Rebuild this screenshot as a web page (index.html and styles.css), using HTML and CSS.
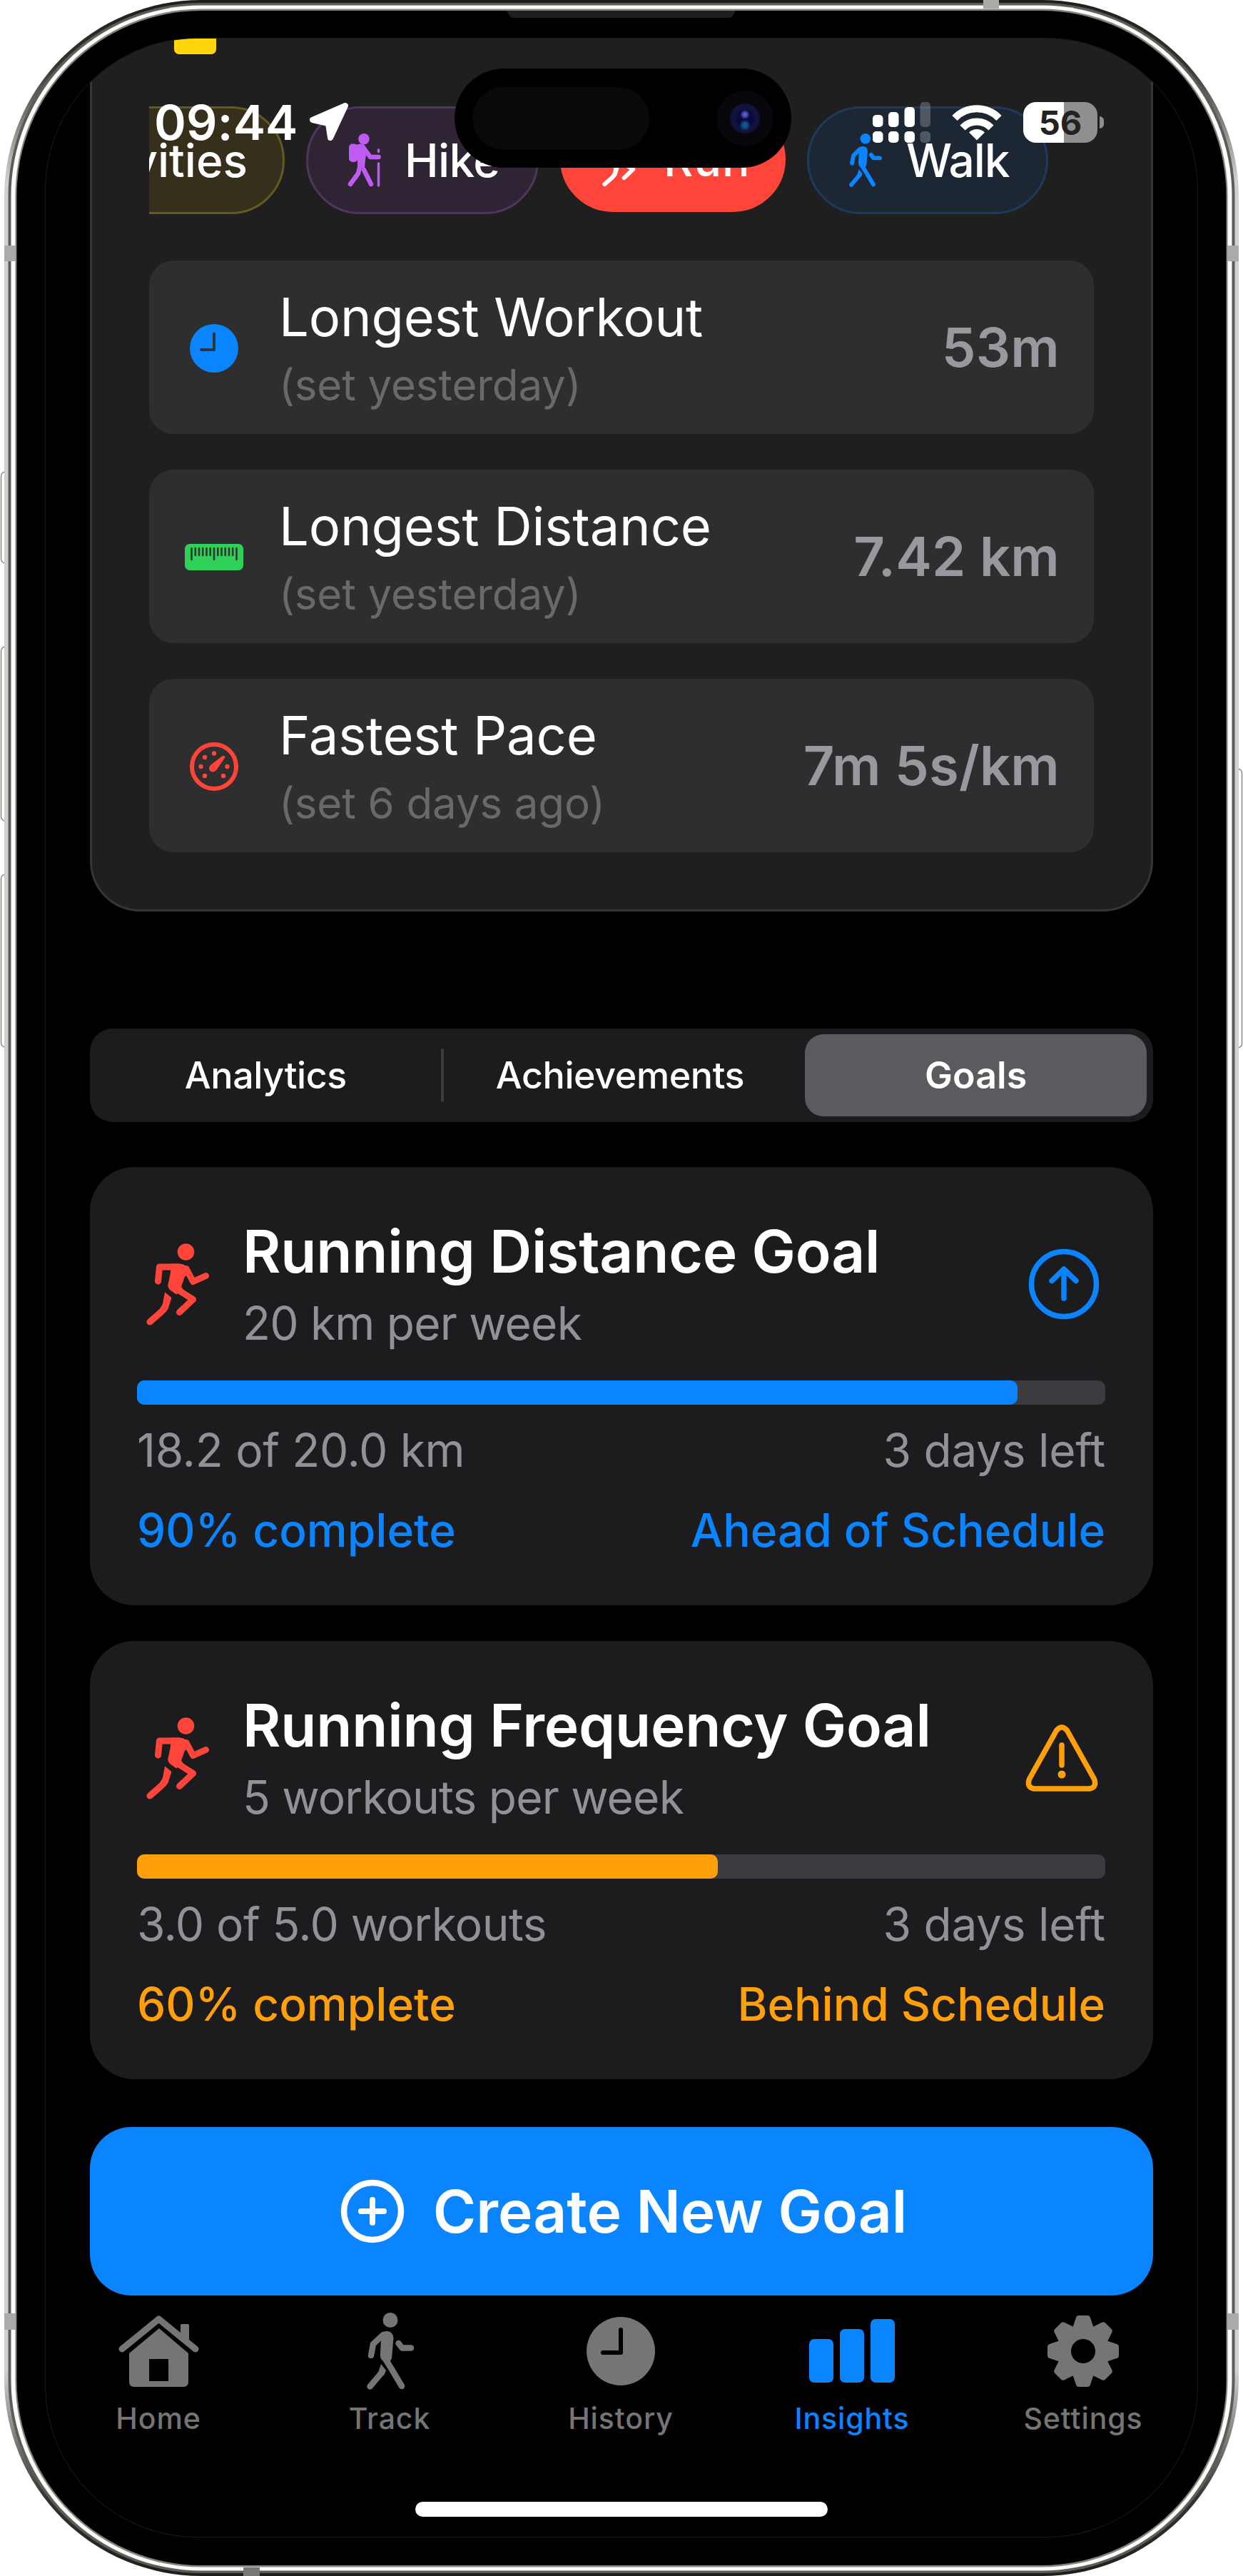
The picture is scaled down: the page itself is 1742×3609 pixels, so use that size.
FILE: index.html
```html
<!DOCTYPE html>
<html lang="en">
<head>
<meta charset="utf-8">
<title>Insights</title>
<link rel="stylesheet" href="styles.css">
</head>
<body>
<svg class="defs" width="0" height="0" aria-hidden="true">
  <symbol id="i-run" viewBox="0 0 88 114">
    <g fill="none" stroke="currentColor" stroke-width="9" stroke-linecap="round" stroke-linejoin="round">
      <path d="M16.500 52.500 18.500 32.500H46"/>
      <path d="M56 35 65.500 53 83.500 45"/>
      <path d="M38 60.500 65.500 78 46.500 96"/>
      <path d="M26.500 88 21.500 95 5 109.500"/>
    </g>
    <circle cx="55.500" cy="11.500" r="11.800" fill="currentColor"/>
    <path fill="currentColor" d="M34 28H46Q54 28 58 34L62 42 54 46 49 60 52 64 42 71 33 64.500Q29 61 31 55L34 40Z"/>
    <path fill="currentColor" d="M26 68 35.500 75.500 31 90Q29 95 24 98L19 91Q22 88 23 84Z"/>
  </symbol>
  <symbol id="i-walk" viewBox="0 0 67 108">
    <circle cx="34" cy="10.500" r="10.500" fill="currentColor"/>
    <path fill="currentColor" d="M19 31Q24 25.500 30 26 38 27 38.500 36L36 64 33 70 24 68Q19 65 20 56L21 38Z"/>
    <g fill="none" stroke="currentColor" stroke-width="8.500" stroke-linecap="round" stroke-linejoin="round">
      <path d="M24 31 10 44 7 60"/>
      <path d="M45.500 43 50.500 49.500H63"/>
      <path d="M27 65 37 81 50 103"/>
      <path d="M22 84 5.500 103.500"/>
    </g>
    <path fill="currentColor" d="M21 72 28 81 25 88 17 84Z"/>
  </symbol>
  <symbol id="i-hike" viewBox="0 0 47 75">
    <circle cx="23" cy="7.700" r="7.700" fill="currentColor"/>
    <rect x="2" y="14.500" width="12.500" height="25.500" rx="5" fill="currentColor"/>
    <path fill="currentColor" d="M12 16Q17 13.500 22 15 26 17 27 24L25 37 24 48 14 48 14 18Z"/>
    <g fill="none" stroke="currentColor" stroke-width="6.500" stroke-linecap="round" stroke-linejoin="round">
      <path d="M23 21 32 33H43.500"/>
      <path d="M18 44 15 56 4 71"/>
      <path d="M23 51 33 71"/>
      <path d="M43.500 23V25.500M43.500 42V73" stroke-width="3.500"/>
    </g>
  </symbol>
</svg>

<main class="phone">
  <svg class="frame" width="1742" height="3609" viewBox="0 0 1742 3609" aria-hidden="true">
    <defs>
      <linearGradient id="edge" x1="0" y1="0" x2="0" y2="3609" gradientUnits="userSpaceOnUse">
        <stop offset="0" stop-color="#1e1e1b"/><stop offset=".025" stop-color="#33332f"/><stop offset=".07" stop-color="#d0d0ce"/>
        <stop offset=".92" stop-color="#d0d0ce"/><stop offset=".97" stop-color="#33332f"/><stop offset="1" stop-color="#1e1e1b"/>
      </linearGradient>
    </defs>
    <g fill="#fff" stroke="#8a8a88" stroke-width="1.500">
      <rect x="1.500" y="661" width="12" height="128" rx="6"/>
      <rect x="1.500" y="906" width="12" height="244" rx="6"/>
      <rect x="1.500" y="1225" width="12" height="242" rx="6"/>
      <rect x="1728.500" y="1077" width="12" height="391" rx="6"/>
    </g>
    <rect x="6" y="0" width="1730" height="3609" rx="276" fill="url(#edge)"/>
    <rect x="11.500" y="4" width="1719" height="3601" rx="271" fill="#5c5c59"/>
    <rect x="15.500" y="7.500" width="1711" height="3594" rx="267" fill="#fbfbf9"/>
    <rect x="21.500" y="12.500" width="1699" height="3584" rx="261" fill="#84847f"/>
    <rect x="23.500" y="15" width="1695" height="3579" rx="259" fill="#000"/>
    <g fill="#aaaaa8">
      <path d="M6 344H22V366H6ZM1720 344H1736V366H1720ZM6 3241H22V3264H6ZM1720 3241H1736V3264H1720Z"/>
      <path d="M1378 0H1400V12H1378Z"/>
      <path d="M341 3597H364V3609H341Z" fill="#777774"/>
    </g>
    <path d="M710 15H1031L1027 22Q1025 25 1022 25H719Q716 25 714 22Z" fill="#1e1e1e"/>
  </svg>

  <div class="screen">
    <div class="content">
      <section class="records">
        <span class="peek"></span>
        <div class="pills">
          <span class="pill pill-all">Activities</span>
          <span class="pill pill-hike"><svg><use href="#i-hike"/></svg>Hike</span>
          <span class="pill pill-run"><svg><use href="#i-run"/></svg>Run</span>
          <span class="pill pill-walk"><svg><use href="#i-walk"/></svg>Walk</span>
        </div>
        <ul class="rows">
          <li class="row">
            <span class="row-icon"><svg width="68" height="68" viewBox="0 0 68 68"><circle cx="34" cy="34" r="34" fill="#0a84ff"/><path d="M34 13.500V36H16" fill="none" stroke="#2c3440" stroke-width="4" stroke-linecap="round" stroke-linejoin="round"/></svg></span>
            <div class="row-text"><h3>Longest Workout</h3><p>(set yesterday)</p></div>
            <b>53m</b>
          </li>
          <li class="row">
            <span class="row-icon"><svg width="82" height="37" viewBox="0 0 82 37"><rect width="82" height="37" rx="7" fill="#30d158"/><path d="M9.500 6V22M41 6V22M72.500 6V22M14.800 6V16M20 6V16M25.200 6V16M30.500 6V16M35.700 6V16M46.300 6V16M51.500 6V16M56.700 6V16M62 6V16M67.200 6V16" stroke="#2c3a30" stroke-width="2.600" stroke-linecap="round"/></svg></span>
            <div class="row-text"><h3>Longest Distance</h3><p>(set yesterday)</p></div>
            <b>7.42 km</b>
          </li>
          <li class="row">
            <span class="row-icon"><svg width="68" height="68" viewBox="0 0 68 68" fill="#ff453a"><circle cx="34" cy="34" r="31" fill="none" stroke="#ff453a" stroke-width="6"/><circle cx="34" cy="15.500" r="3.200"/><circle cx="21" cy="21" r="3.200"/><circle cx="15.500" cy="34" r="3.200"/><circle cx="52.500" cy="34" r="3.200"/><circle cx="21" cy="47" r="3.200"/><circle cx="47" cy="47" r="3.200"/><path d="M49 19.500Q47 18 45 19.500L29 32Q25 36.500 28.500 40 33 43.500 37.500 38.500L48.500 22.500Q50 20.500 49 19.500Z"/></svg></span>
            <div class="row-text"><h3>Fastest Pace</h3><p>(set 6 days ago)</p></div>
            <b>7m 5s/km</b>
          </li>
        </ul>
      </section>

      <nav class="segments">
        <span>Analytics</span>
        <span class="divided">Achievements</span>
        <span class="selected">Goals</span>
      </nav>

      <article class="goal ahead">
        <header>
          <svg class="runner"><use href="#i-run"/></svg>
          <div class="goal-text"><h2>Running Distance Goal</h2><p>20 km per week</p></div>
          <svg class="state" width="102" height="100" viewBox="0 0 102 100" fill="none" stroke="#0a84ff" stroke-width="7.500" stroke-linecap="round" stroke-linejoin="round"><circle cx="51" cy="50" r="45.500"/><path d="M51 70V30M34 45.500 51 29 68 45.500"/></svg>
        </header>
        <div class="bar"><i style="width:90.9%"></i></div>
        <div class="stats"><span>18.2 of 20.0 km</span><span>3 days left</span></div>
        <div class="stats status"><span>90% complete</span><span>Ahead of Schedule</span></div>
      </article>

      <article class="goal behind">
        <header>
          <svg class="runner"><use href="#i-run"/></svg>
          <div class="goal-text"><h2>Running Frequency Goal</h2><p>5 workouts per week</p></div>
          <svg class="state" width="102" height="94" viewBox="0 0 102 94" fill="none" stroke="#ff9f0a" stroke-width="7.500" stroke-linecap="round" stroke-linejoin="round"><path d="M43.500 8.500Q51 -.5 58.500 8.500L96.500 76.500Q100.500 88 90 90H12Q1.500 88 5.500 76.500Z"/><path d="M51 29V57"/><circle cx="51" cy="70" r="5.500" fill="#ff9f0a" stroke="none"/></svg>
        </header>
        <div class="bar"><i style="width:60%"></i></div>
        <div class="stats"><span class="tight">3.0 of 5.0 workouts</span><span>3 days left</span></div>
        <div class="stats status"><span>60% complete</span><span>Behind Schedule</span></div>
      </article>

      <button class="create">
        <svg width="90" height="90" viewBox="0 0 90 90" fill="none" stroke="#fff" stroke-width="8.500" stroke-linecap="round"><circle cx="45" cy="45" r="40"/><path d="M45 29V61M29 45H61" stroke-width="8"/></svg>
        Create New Goal
      </button>
    </div>

    <nav class="tabs">
      <span class="tab"><svg width="113" height="101" viewBox="0 0 113 101"><path d="M87 14Q87 12 89 12H97Q99 12 99 14V40L87 30Z" fill="currentColor"/><path d="M5 47 56.500 5 108 47" fill="none" stroke="currentColor" stroke-width="9" stroke-linecap="round" stroke-linejoin="round"/><path d="M15 53 57 18 98 53V93Q98 100 91 100H22Q15 100 15 93Z" fill="currentColor"/><rect x="43" y="61" width="27" height="31" fill="#000"/></svg>Home</span>
      <span class="tab"><svg width="67" height="108"><use href="#i-walk"/></svg>Track</span>
      <span class="tab"><svg width="96" height="96" viewBox="0 0 96 96"><circle cx="48" cy="48" r="48" fill="currentColor"/><path d="M48 18V50H23" fill="none" stroke="#000" stroke-width="6" stroke-linecap="round" stroke-linejoin="round"/></svg>History</span>
      <span class="tab active"><svg width="120" height="90" viewBox="0 0 120 90" fill="currentColor"><rect x="0" y="28" width="34" height="61" rx="7"/><rect x="43" y="14" width="34" height="75" rx="7"/><rect x="86" y="0" width="34" height="89" rx="7"/></svg>Insights</span>
      <span class="tab"><svg width="100" height="100" viewBox="-50 -50 100 100" fill="currentColor"><defs><path id="tooth" d="M-15 -32 -10 -47Q-9 -50 -6 -50H6Q9 -50 10 -47L15 -32Z"/></defs><circle r="27" fill="none" stroke="currentColor" stroke-width="20"/><use href="#tooth"/><use href="#tooth" transform="rotate(45)"/><use href="#tooth" transform="rotate(90)"/><use href="#tooth" transform="rotate(135)"/><use href="#tooth" transform="rotate(180)"/><use href="#tooth" transform="rotate(225)"/><use href="#tooth" transform="rotate(270)"/><use href="#tooth" transform="rotate(315)"/></svg>Settings</span>
    </nav>
    <div class="home-indicator"></div>

    <div class="statusbar">
      <span class="time">09:44</span>
      <svg class="loc" width="56" height="54" viewBox="0 0 56 54"><path d="M51 4 5 24 27 29 30 49Z" fill="#fff" stroke="#fff" stroke-width="8" stroke-linejoin="round"/></svg>
      <div class="signals">
        <svg width="81" height="57" viewBox="0 0 81 57" fill="#fff"><rect x="0" y="18" width="14.500" height="17" rx="5"/><rect x="22" y="14" width="14.500" height="21" rx="5"/><rect x="44.500" y="7" width="14.500" height="28" rx="5"/><rect x="66.500" y="0" width="14.500" height="35" rx="5" opacity=".22"/><rect x="0" y="41" width="14.500" height="16" rx="5"/><rect x="22" y="41" width="14.500" height="16" rx="5"/><rect x="44.500" y="41" width="14.500" height="16" rx="5"/><rect x="66.500" y="41" width="14.500" height="16" rx="5" opacity=".22"/></svg>
        <svg width="70" height="51" viewBox="0 0 70 51"><path d="M4 19.500A43 43 0 0 1 66 19.500M15 33A28 28 0 0 1 55 33" fill="none" stroke="#fff" stroke-width="10"/><path d="M35 50.500 24 39.500A15.500 15.500 0 0 1 46 39.500Z" fill="#fff"/></svg>
        <span class="battery"><span>56</span></span>
      </div>
    </div>
    <div class="island"><span class="sensor"></span><span class="lens"></span></div>
  </div>
</main>
</body>
</html>
```

FILE: styles.css
```css
* { box-sizing: border-box; margin: 0; padding: 0; }

body {
  width: 1742px;
  height: 3609px;
  overflow: hidden;
  background: #fff;
  color: #fff;
  font-family: Inter, "Liberation Sans", sans-serif;
}

.defs { position: absolute; }

.phone {
  position: relative;
  width: 1742px;
  height: 3609px;
  padding: 54px 64px;
}

.frame { position: absolute; left: 0; top: 0; }

.screen {
  position: relative;
  display: flex;
  flex-direction: column;
  width: 1614px;
  height: 3500px;
  overflow: hidden;
  border-radius: 212px;
  background: #000;
  box-shadow: 0 0 0 1px #1b1b1b;
}

.content { display: flex; flex-direction: column; padding: 0 62px; }

/* personal records */
.records {
  position: relative;
  height: 1223px;
  padding: 95px 80px 0;
  border: 3px solid #353535;
  border-top: 0;
  border-radius: 0 0 70px 70px;
  background: #1f1f1f;
}

.peek {
  position: absolute;
  left: 115px;
  top: 0;
  width: 59px;
  height: 22px;
  border-radius: 0 0 7px 7px;
  background: #ffd60a;
}

.pills { display: flex; gap: 30px; height: 151px; overflow: hidden; }

.pill {
  display: flex;
  flex: none;
  align-items: center;
  height: 151px;
  padding-left: 55px;
  border: 3px solid;
  border-radius: 76px;
  font-size: 64px;
  font-weight: 500;
  white-space: nowrap;
}

.pill svg { width: 47px; height: 75px; margin-right: 33px; }

.pill-all {
  width: 390px;
  margin-left: -200px;
  padding: 0 49px 0 0;
  justify-content: flex-end;
  border-color: #625a1f;
  background: #352f1c;
}

.pill-hike { width: 326px; border-color: #513561; background: #2f2433; letter-spacing: -.6px; }
.pill-hike svg { color: #bf5af2; }
.pill-run { width: 316px; height: 148px; border-color: #ff453a; background: #ff453a; letter-spacing: 1px; }
.pill-run svg { width: 60px; margin-right: 27px; }
.pill-walk { width: 338px; border-color: #1d3a5c; background: #1d2733; letter-spacing: -1.200px; }
.pill-walk svg { color: #0a84ff; margin-right: 34px; }

.rows { display: flex; flex-direction: column; gap: 50px; margin-top: 65px; list-style: none; }

.row {
  display: flex;
  align-items: center;
  height: 243px;
  padding: 0 48px 0 45px;
  border-radius: 34px;
  background: #2e2e2e;
}

.row-icon { display: flex; justify-content: center; width: 90px; margin: 2px 46px 0 1px; }
.row-text { flex: 1; align-self: flex-start; padding-top: 34px; }
.row h3 { font-size: 74px; font-weight: 400; line-height: 90px; letter-spacing: -.15px; }
.row p { margin-top: 10px; color: #69696b; font-size: 60px; line-height: 80px; letter-spacing: -.1px; }
.row b { margin-top: -2px; color: #98989f; font-size: 76px; font-weight: 600; letter-spacing: .2px; }

/* segmented control */
.segments {
  display: grid;
  grid-template-columns: repeat(3, 1fr);
  height: 131px;
  margin-top: 164px;
  border-radius: 32px;
  background: #1c1c1e;
  font-size: 52px;
  font-weight: 500;
  letter-spacing: -.400px;
}

.segments span { position: relative; display: flex; align-items: center; justify-content: center; padding-right: 4px; }
.segments .divided::before {
  content: "";
  position: absolute;
  left: -5px;
  top: 28px;
  width: 4px;
  height: 75px;
  border-radius: 2px;
  background: #3c3c3f;
}
.segments .selected { margin: 8px 9px; padding: 0; border-radius: 26px; background: #5b5a5f; font-weight: 600; letter-spacing: 0; }

/* goals */
.goal {
  height: 614px;
  margin-top: 50px;
  padding: 69px 67px 0 66px;
  border-radius: 62px;
  background: #1c1c1e;
}

.segments + .goal { margin-top: 63px; }
.goal header { display: flex; align-items: center; }
.runner { width: 88px; height: 115px; margin: 0 47px 0 13px; color: #ff453a; }
.goal-text { flex: 1; }
.goal h2 { color: #fff; font-size: 82px; font-weight: 600; line-height: 100px; letter-spacing: -.200px; white-space: nowrap; }
.goal p { margin-top: 10px; color: #929196; font-size: 64px; line-height: 80px; letter-spacing: -.800px; }
.goal .state { margin-right: 7px; }
.behind .state { margin-right: 10px; }

.bar { height: 34px; margin: 40px 0 24px; border-radius: 10px; background: #3c3b40; }
.bar i { display: block; height: 34px; border-radius: 10px; background: currentColor; }
.ahead { color: #0a84ff; }
.behind { color: #ff9f0a; }

.stats { display: flex; justify-content: space-between; color: #929196; font-size: 64px; line-height: 80px; letter-spacing: -.300px; }
.stats .tight { letter-spacing: -.550px; }
.status { margin-top: 32px; color: inherit; font-weight: 500; letter-spacing: 0; }

.create {
  display: flex;
  align-items: center;
  justify-content: center;
  gap: 40px;
  height: 236px;
  margin-top: 67px;
  padding-left: 6px;
  border: 0;
  border-radius: 58px;
  background: #0a84ff;
  color: #fff;
  font: 600 82px Inter, "Liberation Sans", sans-serif;
}

/* tab bar */
.tabs { display: grid; grid-template-columns: repeat(5, 324px); margin: 22px -4px 0; }

.tab {
  display: grid;
  grid-template-rows: 112px 50px;
  row-gap: 13px;
  place-items: center;
  color: #757575;
  font-size: 41px;
  font-weight: 500;
  line-height: 50px;
  letter-spacing: .9px;
}

.tab.active { color: #0a84ff; }

.home-indicator { width: 578px; height: 21px; margin: 92px auto 0; border-radius: 11px; background: #fff; }

/* system overlays */
.statusbar {
  position: absolute;
  left: 0;
  right: 0;
  top: 77px;
  display: flex;
  align-items: center;
  height: 80px;
  padding: 0 131px 0 152px;
}

.time { font-size: 68px; font-weight: 600; letter-spacing: .2px; }
.loc { margin-left: 15px; }
.signals { display: flex; align-items: center; gap: 30px; margin-left: auto; }

.battery {
  position: relative;
  display: flex;
  align-items: center;
  justify-content: center;
  width: 104px;
  height: 57px;
  margin-right: 9px;
  border-radius: 18px;
  background: linear-gradient(90deg, #fff 57px, #8f8f8f 57px);
  color: #222;
  font-size: 47px;
  font-weight: 700;
}

.battery::after {
  content: "";
  position: absolute;
  right: -9px;
  top: 20px;
  width: 6px;
  height: 17px;
  border-radius: 0 6px 6px 0;
  background: #8f8f8f;
}

.island {
  position: absolute;
  left: 573px;
  top: 42px;
  display: flex;
  align-items: center;
  justify-content: space-between;
  width: 472px;
  height: 139px;
  padding: 0 25px;
  border-radius: 70px;
  background: #000;
}

.sensor { width: 248px; height: 88px; border-radius: 44px; background: #090909; }

.lens {
  width: 80px;
  height: 78px;
  border-radius: 50%;
  background:
    radial-gradient(circle at 50% 43%, #5a5ac8 0 2px, transparent 7px),
    radial-gradient(circle at 50% 62%, #125590 0 3px, transparent 8px),
    radial-gradient(circle, #08083c 0 11px, #10133c 14px 20px, #07060a 22px);
}
```
